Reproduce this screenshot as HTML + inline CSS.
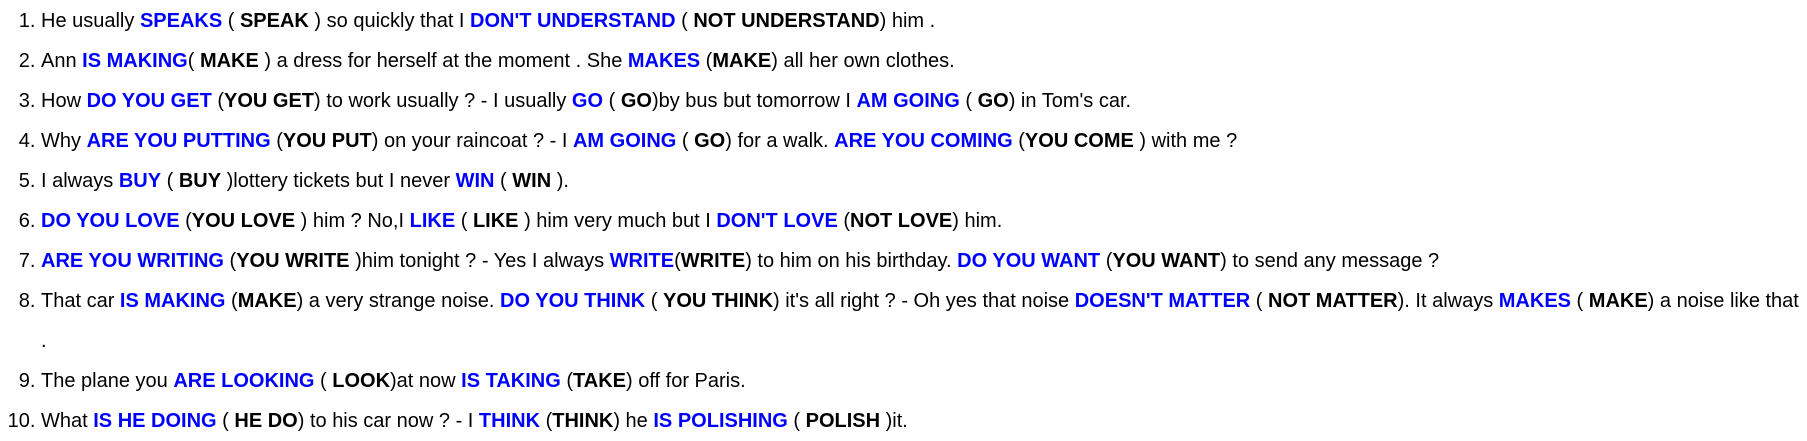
<!DOCTYPE html>
<html><head><meta charset="utf-8"><style>
body{margin:0;background:#fff;font-family:"Liberation Sans",Arial,sans-serif;font-size:20px;color:#000;width:1807px;height:432px;overflow:hidden}
ol{margin:0;padding:1px 0 0 41px;width:1780px}
li{line-height:40px}
b{font-weight:bold}
.b{color:#0000ff;font-weight:bold}
</style></head><body>
<ol>
<li>He usually <span class="b">SPEAKS</span> ( <b>SPEAK</b> ) so quickly that I <span class="b">DON'T UNDERSTAND</span> ( <b>NOT UNDERSTAND</b>) him .</li>
<li>Ann <span class="b">IS MAKING</span>( <b>MAKE</b> ) a dress for herself at the moment . She <span class="b">MAKES</span> (<b>MAKE</b>) all her own clothes.</li>
<li>How <span class="b">DO YOU GET</span> (<b>YOU GET</b>) to work usually ? - I usually <span class="b">GO</span> ( <b>GO</b>)by bus but tomorrow I <span class="b">AM GOING</span> ( <b>GO</b>) in Tom's car.</li>
<li>Why <span class="b">ARE YOU PUTTING</span> (<b>YOU PUT</b>) on your raincoat ? - I <span class="b">AM GOING</span> ( <b>GO</b>) for a walk. <span class="b">ARE YOU COMING</span> (<b>YOU COME</b> ) with me ?</li>
<li>I always <span class="b">BUY</span> ( <b>BUY</b> )lottery tickets but I never <span class="b">WIN</span> ( <b>WIN</b> ).</li>
<li><span class="b">DO YOU LOVE</span> (<b>YOU LOVE</b> ) him ? No,I <span class="b">LIKE</span> ( <b>LIKE</b> ) him very much but I <span class="b">DON'T LOVE</span> (<b>NOT LOVE</b>) him.</li>
<li><span class="b">ARE YOU WRITING</span> (<b>YOU WRITE</b> )him tonight ? - Yes I always <span class="b">WRITE</span>(<b>WRITE</b>) to him on his birthday. <span class="b">DO YOU WANT</span> (<b>YOU WANT</b>) to send any message ?</li>
<li style="white-space:nowrap">That car <span class="b">IS MAKING</span> (<b>MAKE</b>) a very strange noise. <span class="b">DO YOU THINK</span> ( <b>YOU THINK</b>) it's all right ? - Oh yes that noise <span class="b">DOESN'T MATTER</span> ( <b>NOT MATTER</b>). It always <span class="b">MAKES</span> ( <b>MAKE</b>) a noise like that<br>.</li>
<li>The plane you <span class="b">ARE LOOKING</span> ( <b>LOOK</b>)at now <span class="b">IS TAKING</span> (<b>TAKE</b>) off for Paris.</li>
<li>What <span class="b">IS HE DOING</span> ( <b>HE DO</b>) to his car now ? - I <span class="b">THINK</span> (<b>THINK</b>) he <span class="b">IS POLISHING</span> ( <b>POLISH</b> )it.</li>
</ol>
</body></html>
